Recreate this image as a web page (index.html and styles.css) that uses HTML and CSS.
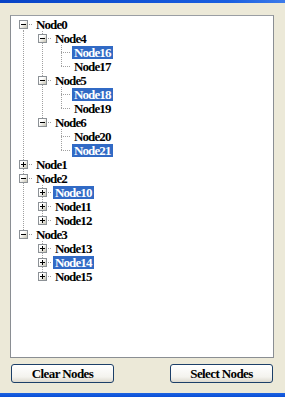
FILE: index.html
```html
<!DOCTYPE HTML>
<html>
<head>
	<meta charset="utf-8">
	<title>Tree Nodes</title>
	<link rel="stylesheet" href="styles.css">
</head>
<body>
	<div class="titlebar"></div>

	<div class="window">
		<div class="tree">
			<div class="row"><span class="cell first"><span class="box"></span></span><span class="label">Node0</span></div>
			<div class="row"><span class="cell pipe"></span><span class="cell tee"><span class="box"></span></span><span class="label">Node4</span></div>
			<div class="row"><span class="cell pipe"></span><span class="cell pipe"></span><span class="cell tee"></span><span class="label selected">Node16</span></div>
			<div class="row"><span class="cell pipe"></span><span class="cell pipe"></span><span class="cell elbow"></span><span class="label">Node17</span></div>
			<div class="row"><span class="cell pipe"></span><span class="cell tee"><span class="box"></span></span><span class="label">Node5</span></div>
			<div class="row"><span class="cell pipe"></span><span class="cell pipe"></span><span class="cell tee"></span><span class="label selected">Node18</span></div>
			<div class="row"><span class="cell pipe"></span><span class="cell pipe"></span><span class="cell elbow"></span><span class="label">Node19</span></div>
			<div class="row"><span class="cell pipe"></span><span class="cell elbow"><span class="box"></span></span><span class="label">Node6</span></div>
			<div class="row"><span class="cell pipe"></span><span class="cell"></span><span class="cell tee"></span><span class="label">Node20</span></div>
			<div class="row"><span class="cell pipe"></span><span class="cell"></span><span class="cell elbow"></span><span class="label selected">Node21</span></div>
			<div class="row"><span class="cell tee"><span class="box plus"></span></span><span class="label">Node1</span></div>
			<div class="row"><span class="cell tee"><span class="box"></span></span><span class="label">Node2</span></div>
			<div class="row"><span class="cell pipe"></span><span class="cell tee"><span class="box plus"></span></span><span class="label selected">Node10</span></div>
			<div class="row"><span class="cell pipe"></span><span class="cell tee"><span class="box plus"></span></span><span class="label">Node11</span></div>
			<div class="row"><span class="cell pipe"></span><span class="cell elbow"><span class="box plus"></span></span><span class="label">Node12</span></div>
			<div class="row"><span class="cell elbow"><span class="box"></span></span><span class="label">Node3</span></div>
			<div class="row"><span class="cell"></span><span class="cell tee"><span class="box plus"></span></span><span class="label">Node13</span></div>
			<div class="row"><span class="cell"></span><span class="cell tee"><span class="box plus"></span></span><span class="label selected">Node14</span></div>
			<div class="row"><span class="cell"></span><span class="cell elbow"><span class="box plus"></span></span><span class="label">Node15</span></div>
		</div>

		<div class="buttons">
			<button class="btn">Clear Nodes</button>
			<button class="btn">Select Nodes</button>
		</div>
	</div>

	<div class="taskbar"></div>
</body>
</html>
```

FILE: styles.css
```css
html, body {
	margin: 0;
	height: 100%;
}

body {
	background: #ECE9D8;
	font-family: "Liberation Serif", serif;
	font-size: 13px;
	display: flex;
	flex-direction: column;
	overflow: hidden;
}

.titlebar {
	height: 3px;
	background: linear-gradient(to right, #0843C6, #1A5FE0 80%, #3D7BEA);
	flex: none;
}

.taskbar {
	height: 4px;
	background: linear-gradient(#1C62E0, #0B4FD6);
	flex: none;
}

.window {
	flex: 1;
	padding: 12px 11px 10px 10px;
	display: flex;
	flex-direction: column;
}

.tree {
	height: 343px;
	box-sizing: border-box;
	border: 1px solid #8A8E93;
	border-top-color: #9A9EA3;
	background: #FFF;
	padding: 1px 0 0 3px;
}

.row {
	height: 14px;
	display: flex;
	align-items: flex-start;
}

.cell {
	width: 19px;
	height: 14px;
	flex: none;
	display: flex;
	justify-content: center;
	align-items: flex-start;
	background-repeat: no-repeat;
}

.pipe {
	background-image: repeating-linear-gradient(to bottom, #A0A0A0 0 1px, transparent 1px 2px);
	background-size: 1px 14px;
	background-position: 9px 0;
}

.tee {
	background-image:
		repeating-linear-gradient(to bottom, #A0A0A0 0 1px, transparent 1px 2px),
		repeating-linear-gradient(to right, #A0A0A0 0 1px, transparent 1px 2px);
	background-size: 1px 14px, 10px 1px;
	background-position: 9px 0, 9px 7px;
}

.elbow {
	background-image:
		repeating-linear-gradient(to bottom, #A0A0A0 0 1px, transparent 1px 2px),
		repeating-linear-gradient(to right, #A0A0A0 0 1px, transparent 1px 2px);
	background-size: 1px 7px, 10px 1px;
	background-position: 9px 0, 9px 7px;
}

.first {
	background-image:
		repeating-linear-gradient(to bottom, #A0A0A0 0 1px, transparent 1px 2px),
		repeating-linear-gradient(to right, #A0A0A0 0 1px, transparent 1px 2px);
	background-size: 1px 7px, 10px 1px;
	background-position: 9px 7px, 9px 7px;
}

.box {
	width: 9px;
	height: 9px;
	margin-top: 3px;
	box-sizing: border-box;
	border: 1px solid #8C9196;
	background:
		linear-gradient(#000, #000) center / 5px 1px no-repeat,
		linear-gradient(135deg, #FFF 35%, #C5C2B2);
}

.box.plus {
	background:
		linear-gradient(#000, #000) center / 5px 1px no-repeat,
		linear-gradient(#000, #000) center / 1px 5px no-repeat,
		linear-gradient(135deg, #FFF 35%, #C5C2B2);
}

.label {
	margin: 1px 0 0 1px;
	padding: 0 2px;
	height: 13px;
	line-height: 13px;
	font-weight: bold;
	letter-spacing: -0.9px;
	color: #000;
	white-space: nowrap;
}

.label.selected {
	background: #316AC5;
	color: #FFF;
}

.buttons {
	display: flex;
	justify-content: space-between;
	margin-top: 6px;
	padding: 0 1px 0 1px;
}

.btn {
	width: 103px;
	height: 19px;
	padding: 0;
	border: 1px solid #1C3F68;
	border-radius: 3px;
	background: linear-gradient(#FFFFFF, #F4F3EE 70%, #DDD9CE);
	font-family: "Liberation Serif", serif;
	font-size: 13px;
	font-weight: bold;
	letter-spacing: -0.6px;
	color: #000;
}
```
